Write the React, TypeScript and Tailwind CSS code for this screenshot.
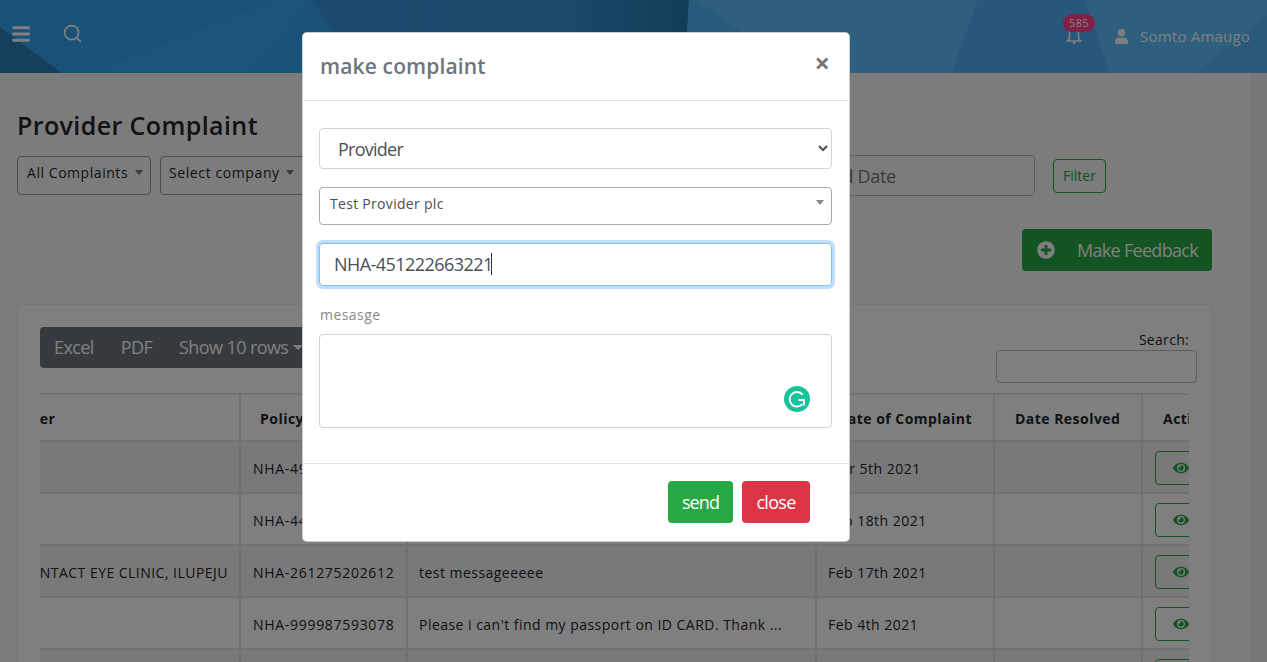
import React from "react";
import { FaBars, FaUser, FaPlusCircle, FaEye } from "react-icons/fa";
import { FiSearch } from "react-icons/fi";

const rows = [
  { name: "", policy: "NHA-499871203345", msg: "complaint", date: "Mar 5th 2021" },
  { name: "", policy: "NHA-448120967712", msg: "complaint", date: "Feb 18th 2021" },
  { name: "CONTACT EYE CLINIC, ILUPEJU", policy: "NHA-261275202612", msg: "test messageeeee", date: "Feb 17th 2021" },
  { name: "", policy: "NHA-999987593078", msg: "Please i can't find my passport on ID CARD. Thank ...", date: "Feb 4th 2021" },
  { name: "", policy: "NHA-100238475610", msg: "complaint", date: "Feb 1st 2021" },
];

function Grammarly() {
  return (
    <svg viewBox="0 0 26 26" className="absolute right-[21px] bottom-[15px] h-[26px] w-[26px]">
      <circle cx="13" cy="13" r="13" fill="#15c39a" />
      <path d="M18.6 8.6A7.3 7.3 0 1 0 18.4 18.2" fill="none" stroke="#fff" strokeWidth="1.9" />
      <path d="M14.5 14h5.4v5.6" fill="none" stroke="#fff" strokeWidth="1.9" />
    </svg>
  );
}

function Bell() {
  return (
    <svg viewBox="0 0 18 18" className="h-[18px] w-[18px]" fill="none" stroke="#fff" strokeWidth="1.6">
      <path d="M4.5 1v9.5c0 1.6-1.2 3-3 3.5h15c-1.8-.5-3-1.9-3-3.5V1" />
      <path d="M7 15h4l-2 2.5z" fill="#fff" stroke="none" />
    </svg>
  );
}

export default function App() {
  return (
    <div className="relative flex h-[662px] w-full flex-col overflow-hidden bg-white text-[#212529] font-['Open_Sans','Noto_Sans',sans-serif]">
      <header className="relative flex h-[73px] shrink-0 items-start overflow-hidden bg-[#34a4ee] text-white">
        <svg className="absolute inset-0 h-full w-full" viewBox="0 0 1267 73" preserveAspectRatio="none">
          <defs>
            <linearGradient id="deep" x1="0" x2="1" y1="0" y2="0">
              <stop offset="0" stopColor="#3494d8" />
              <stop offset="0.7" stopColor="#3290d0" />
              <stop offset="1" stopColor="#247ab0" />
            </linearGradient>
          </defs>
          <polygon points="0,27 62,73 0,73" fill="#2c7eb8" />
          <polygon points="90,73 275,0 312,0 250,73" fill="#39a9f2" />
          <polygon points="312,0 689,0 685,73 360,73" fill="url(#deep)" />
          <polygon points="689,0 1267,0 1267,73 685,73" fill="#5cbeff" />
          <polygon points="689,0 696,0 800,73 685,73" fill="#50b4f6" />
          <polygon points="978,0 1085,0 1110,73 951,73" fill="#4eb0f6" />
          <polygon points="1195,73 1267,15 1267,73" fill="#54b4f4" />
        </svg>
        <div className="relative flex h-full w-full items-start">
          <FaBars className="ml-[12px] mt-[24px] h-[20px] w-[18px]" />
          <FiSearch className="ml-[32px] mt-[23px] h-[21px] w-[21px]" strokeWidth={1.8} />
          <div className="relative ml-auto mr-[17px] flex items-center">
            <div className="relative mr-[31px] mt-[26px]">
              <Bell />
              <span className="absolute -top-[13px] -left-[2px] rounded-full bg-[#ff4088] px-[6px] text-[11px] leading-[18px] tracking-[0.3px]">585</span>
            </div>
            <FaUser className="mt-[26px] mr-[11px] h-[15px] w-[15px]" />
            <span className="mt-[26px] text-[15px] leading-[20px] tracking-[0.2px]">Somto Amaugo</span>
          </div>
        </div>
      </header>

      <div className="flex min-h-0 flex-1">
        <main className="min-w-0 flex-1 bg-[#f8f8f8] pl-[17px] pr-[38px]">
          <h1 className="mt-[34px] text-[25px] font-semibold leading-[36px] tracking-[0.4px]">Provider Complaint</h1>
          <div className="mt-[12px] flex h-[41px] items-center">
            <div className="flex h-[39px] w-[134px] shrink-0 items-start justify-between rounded border border-[#999] pl-[9px] pr-[7px] pt-[6px] text-[14px] leading-[20px] tracking-[0.55px]">
              All Complaints <span className="mt-[7px] border-x-[4px] border-t-[5px] border-x-transparent border-t-[#777]" />
            </div>
            <div className="ml-[9px] flex h-[39px] w-[145px] shrink-0 items-start justify-between rounded border border-[#999] pl-[8px] pr-[10px] pt-[6px] text-[14px] leading-[20px] tracking-[0.6px]">
              Select company <span className="mt-[7px] border-x-[4px] border-t-[5px] border-x-transparent border-t-[#777]" />
            </div>
            <input readOnly placeholder="Start Date" className="ml-[9px] h-[41px] w-[484px] shrink-0 rounded border border-[#ccc] px-3 text-[18px]" />
            <input readOnly placeholder="End Date" className="ml-[9px] h-[41px] w-[228px] shrink-0 rounded border border-[#bbb] bg-transparent pl-[14px] pr-3 text-[18px] tracking-[-0.3px] placeholder:text-[#6c757d]" />
            <button className="ml-[18px] h-[34px] w-[53px] shrink-0 rounded border border-[#28a745] text-[14px] text-[#28a745]">Filter</button>
          </div>
          <div className="mt-[33px] flex justify-end">
            <button className="flex h-[42px] w-[190px] items-center rounded bg-[#28a745] pl-[15px] text-[18px] tracking-[-0.7px] text-white">
              <FaPlusCircle className="h-[18px] w-[18px]" />
              <span className="ml-[22px]">Make Feedback</span>
            </button>
          </div>

          <section className="mt-[33px] h-[400px] rounded border border-[#eee] bg-white pl-[22px] pt-[22px]">
            <div className="flex items-start">
              <div className="flex h-[41px] w-[300px] items-center rounded bg-[#6c757d] pl-[14px] text-[18px] tracking-[-0.6px] text-white">
                <span>Excel</span>
                <span className="ml-[27px]">PDF</span>
                <span className="ml-[27px]">Show 10 rows</span>
                <span className="ml-[5px] border-x-[5px] border-t-[5px] border-x-transparent border-t-white" />
              </div>
              <div className="ml-auto mr-[14px] mt-[3px] flex w-[201px] flex-col">
                <span className="pr-[8px] text-right text-[14px] leading-[20px] tracking-[0.3px]">Search:</span>
                <div className="h-[33px] rounded border border-[#bbb]" />
              </div>
            </div>
            <div className="mt-[10px] w-[1149px] overflow-hidden">
              <table className="-ml-[61px] w-[1349px] table-fixed border-collapse text-[14px] tracking-[0.47px]">
                <colgroup>
                  <col className="w-[260px]" />
                  <col className="w-[167px]" />
                  <col className="w-[409px]" />
                  <col className="w-[178px]" />
                  <col className="w-[148px]" />
                  <col className="w-[187px]" />
                </colgroup>
                <thead>
                  <tr className="h-[47px] border-t-2 border-[#dee2e6]">
                    <th className="border-x-2 border-b border-x-[#dee2e6] border-b-black pl-[11px] pt-[2px] text-left font-bold">Provider</th>
                    <th className="border-x-2 border-b border-x-[#dee2e6] border-b-black pl-[19px] pt-[2px] text-left font-bold">Policy Number</th>
                    <th className="border-x-2 border-b border-x-[#dee2e6] border-b-black pl-[20px] pt-[2px] text-left font-bold">Message</th>
                    <th className="border-x-2 border-b border-x-[#dee2e6] border-b-black pl-[20px] pt-[2px] text-left font-bold">Date of Complaint</th>
                    <th className="border-x-2 border-b border-x-[#dee2e6] border-b-black pl-[20px] pt-[2px] text-left font-bold">Date Resolved</th>
                    <th className="border-x-2 border-b border-x-[#dee2e6] border-b-black pl-[20px] pt-[2px] text-left font-bold">Action</th>
                  </tr>
                </thead>
                <tbody>
                  {rows.map((r, i) => (
                    <tr key={r.policy} className={i % 2 === 0 ? "h-[52px] bg-[#f2f2f2]" : "h-[52px]"}>
                      <td className="truncate border-2 border-[#dee2e6] pr-[11px] pt-[2px] text-right">{r.name}</td>
                      <td className="border-2 border-[#dee2e6] pl-3 pt-[2px] tracking-[0.7px]">{r.policy}</td>
                      <td className="truncate border-2 border-[#dee2e6] pl-[11px] pt-[2px]">{r.msg}</td>
                      <td className="border-2 border-[#dee2e6] pl-[11px] pt-[2px]">{r.date}</td>
                      <td className="border-2 border-[#dee2e6]" />
                      <td className="border-2 border-[#dee2e6] pl-3 pt-[2px]">
                        <div className="flex h-[34px] w-[70px] items-center rounded border border-[#28a745] pl-[17px] text-[#28a745]">
                          <FaEye className="h-[16px] w-[16px]" />
                        </div>
                      </td>
                    </tr>
                  ))}
                </tbody>
              </table>
            </div>
          </section>
        </main>
        <div className="w-[17px] shrink-0 bg-[#f1f1f1]" />
      </div>

      <div className="absolute inset-0 z-10 bg-black/50" />

      <div className="absolute left-[302px] top-[32px] z-20 flex h-[510px] w-[548px] flex-col rounded-[5px] border border-black/20 bg-white text-[#495057]">
        <div className="flex h-[68px] shrink-0 items-start justify-between border-b border-[#dee2e6] pl-[17px] pr-[19px]">
          <h2 className="mt-[16px] text-[21px] font-semibold leading-[34px] tracking-[0.15px] text-[#6c757d]">make complaint</h2>
          <span className="mt-[12px] text-[27px] font-bold leading-[36px] text-[#777]">×</span>
        </div>
        <div className="flex flex-1 flex-col pl-[16px] pr-[17px] pt-[27px]">
          <select className="h-[41px] w-full rounded border border-[#ced4da] bg-white pl-[14px] text-[18px] tracking-[-0.75px] outline-none">
            <option>Provider</option>
          </select>
          <div className="mt-[18px] flex h-[38px] items-start justify-between rounded border border-[#aaa] pl-[10px] pr-[7px] pt-[6px] text-[14px] leading-[20px] tracking-[0.3px]">
            Test Provider plc
            <span className="mt-[6px] border-x-[4px] border-t-[5px] border-x-transparent border-t-[#888]" />
          </div>
          <div className="relative mt-[18px]">
            <input readOnly value="NHA-451222663221" className="h-[43px] w-full rounded border border-[#80bdff] pb-[1px] pl-[14px] text-[18px] tracking-[-0.55px] shadow-[0_0_0_3px_rgba(0,123,255,0.25)] outline-none" />
            <span className="absolute left-[172px] top-[10px] h-[22px] w-px bg-[#333]" />
          </div>
          <label className="mt-[19px] pl-px text-[14px] leading-[20px] tracking-[0.45px] text-[#888]">mesasge</label>
          <div className="relative mt-[9px] h-[94px] rounded border border-[#ced4da]">
            <Grammarly />
          </div>
        </div>
        <div className="flex h-[78px] shrink-0 items-start justify-end gap-[9px] border-t border-[#dee2e6] pr-[39px] pt-[17px]">
          <button className="h-[42px] w-[65px] rounded bg-[#28a745] text-[18px] tracking-[-0.9px] text-white">send</button>
          <button className="h-[42px] w-[68px] rounded bg-[#dc3545] text-[18px] tracking-[-0.7px] text-white">close</button>
        </div>
      </div>
    </div>
  );
}
